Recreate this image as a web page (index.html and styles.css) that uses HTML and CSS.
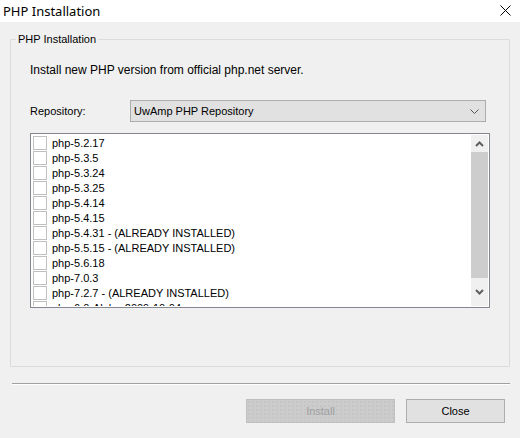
FILE: index.html
```html
<!DOCTYPE html>
<html>
<head>
<meta charset="utf-8">
<link rel="stylesheet" href="styles.css">
</head>
<body>
<div class="window">
  <div class="titlebar">
    <span class="title">PHP Installation</span>
    <svg class="close-x" width="11" height="11" viewBox="0 0 11 11"><path d="M0.5 0.5 L10.5 10.5 M10.5 0.5 L0.5 10.5" stroke="#000" stroke-width="1" fill="none"/></svg>
  </div>
  <div class="client">
    <div class="group">
      <span class="legend">PHP Installation</span>
      <div class="intro">Install new PHP version from official php.net server.</div>
      <div class="repo-row">
        <span class="repo-label">Repository:</span>
        <div class="combo">
          <span>UwAmp PHP Repository</span>
          <svg class="combo-arrow" width="9" height="5" viewBox="0 0 9 5"><path d="M0.5 0.5 L4.5 4.5 L8.5 0.5" stroke="#555" stroke-width="1" fill="none"/></svg>
        </div>
      </div>
      <div class="listbox">
        <div class="items">
          <div class="item"><span class="cb"></span><span>php-5.2.17</span></div>
          <div class="item"><span class="cb"></span><span>php-5.3.5</span></div>
          <div class="item"><span class="cb"></span><span>php-5.3.24</span></div>
          <div class="item"><span class="cb"></span><span>php-5.3.25</span></div>
          <div class="item"><span class="cb"></span><span>php-5.4.14</span></div>
          <div class="item"><span class="cb"></span><span>php-5.4.15</span></div>
          <div class="item"><span class="cb"></span><span>php-5.4.31 - (ALREADY INSTALLED)</span></div>
          <div class="item"><span class="cb"></span><span>php-5.5.15 - (ALREADY INSTALLED)</span></div>
          <div class="item"><span class="cb"></span><span>php-5.6.18</span></div>
          <div class="item"><span class="cb"></span><span>php-7.0.3</span></div>
          <div class="item"><span class="cb"></span><span>php-7.2.7 - (ALREADY INSTALLED)</span></div>
          <div class="item"><span class="cb"></span><span>php-6.0-Alpha-2009-10-04</span></div>
        </div>
        <div class="scrollbar">
          <div class="sb-btn">
            <svg width="9" height="6" viewBox="0 0 9 6"><path d="M1 5 L4.5 1.5 L8 5" stroke="#606060" stroke-width="2" fill="none"/></svg>
          </div>
          <div class="sb-thumb"></div>
          <div class="sb-btn sb-down">
            <svg width="9" height="6" viewBox="0 0 9 6"><path d="M1 1 L4.5 4.5 L8 1" stroke="#606060" stroke-width="2" fill="none"/></svg>
          </div>
        </div>
      </div>
    </div>
    <div class="separator"></div>
    <div class="buttons">
      <button class="btn btn-disabled" disabled>Install</button>
      <button class="btn">Close</button>
    </div>
  </div>
</div>
</body>
</html>
```

FILE: styles.css
```css
html, body {
  margin: 0;
  padding: 0;
}
body {
  width: 520px;
  height: 438px;
  overflow: hidden;
  background: #f0f0f0;
  font-family: "Liberation Sans", Arial, sans-serif;
  font-size: 11px;
  color: #000;
}
.window {
  display: flex;
  flex-direction: column;
  height: 438px;
}
.titlebar {
  flex: none;
  height: 22px;
  background: #fff;
  display: flex;
  align-items: center;
  justify-content: space-between;
  padding: 0 9px 0 3px;
}
.title {
  font-family: "Noto Sans", sans-serif;
  font-size: 13px;
  margin-top: -1px;
}
.close-x {
  margin-top: -2px;
}
.client {
  flex: none;
  display: flex;
  flex-direction: column;
  padding: 17px 10px 0 10px;
}
.group {
  position: relative;
  box-sizing: border-box;
  border: 1px solid #dcdcdc;
  height: 328px;
  padding: 23px 19px 0 19px;
}
.legend {
  position: absolute;
  left: 5px;
  top: -8px;
  padding: 0 2px 0 2px;
  background: #f0f0f0;
  line-height: 14px;
}
.intro {
  font-size: 12px;
  line-height: 14px;
}
.repo-row {
  display: flex;
  align-items: center;
  margin-top: 23px;
}
.repo-label {
  width: 100px;
}
.combo {
  box-sizing: border-box;
  width: 356px;
  height: 22px;
  border: 1px solid #adadad;
  background: #e1e1e1;
  display: flex;
  align-items: center;
  justify-content: space-between;
  padding: 0 6px 0 3px;
}
.combo-arrow {
  margin-top: 1px;
}
.listbox {
  margin-top: 11px;
  width: 460px;
  height: 175px;
  box-sizing: border-box;
  border: 1px solid #828790;
  background: #fff;
  display: flex;
  padding: 1px;
  overflow: hidden;
}
.items {
  flex: 1;
  overflow: hidden;
}
.item {
  height: 15px;
  display: flex;
  align-items: center;
  padding-left: 1px;
  white-space: nowrap;
}
.cb {
  width: 12px;
  height: 12px;
  border: 1px solid #c0c0c0;
  background: #fff;
  margin-right: 5px;
  flex: none;
}
.scrollbar {
  width: 17px;
  flex: none;
  display: flex;
  flex-direction: column;
  background: #f0f0f0;
}
.sb-btn {
  height: 17px;
  display: flex;
  align-items: center;
  justify-content: center;
  flex: none;
}
.sb-thumb {
  height: 126px;
  background: #cdcdcd;
  flex: none;
}
.sb-down {
  flex: 1;
  height: auto;
}
.separator {
  flex: none;
  margin-top: 16px;
  margin-left: 2px;
  height: 1px;
  background: #a0a0a0;
  border-bottom: 1px solid #fff;
}
.buttons {
  display: flex;
  justify-content: flex-end;
  gap: 11px;
  margin-top: 14px;
  padding-right: 5px;
}
.btn {
  font-family: "Liberation Sans", Arial, sans-serif;
  font-size: 11px;
  height: 24px;
  width: 99px;
  border: 1px solid #adadad;
  background: #e1e1e1;
  color: #000;
  padding: 0;
  margin: 0;
}
.btn-disabled {
  width: 149px;
  border-color: #bfbfbf;
  background-color: #cccccc;
  background-image: radial-gradient(circle, #bcbcbc 0.6px, transparent 0.8px);
  background-size: 4px 4px;
  color: #a0a0a0;
}
```
